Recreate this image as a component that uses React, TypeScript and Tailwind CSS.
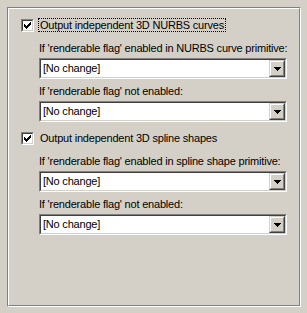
import React from "react";

function Check({ label, focused }: { label: string; focused?: boolean }) {
  return (
    <div className="flex items-center h-[14px]">
      <div className="w-[13px] h-[13px] border-t border-l border-t-[#808080] border-l-[#808080] border-b border-r border-b-white border-r-white">
        <div className="w-full h-full bg-white border-t border-l border-t-[#404040] border-l-[#404040] border-b border-r border-b-[#d4d0c8] border-r-[#d4d0c8] flex items-center justify-center">
          <svg width="7" height="7" viewBox="0 0 7 7" shapeRendering="crispEdges">
            <path d="M0 2h1v3h-1z M1 3h1v3h-1z M2 4h1v3h-1z M3 3h1v3h-1z M4 2h1v3h-1z M5 1h1v3h-1z M6 0h1v3h-1z" fill="#000" />
          </svg>
        </div>
      </div>
      <div
        className={
          focused
            ? "ml-[4px] px-[1px] h-[14px] leading-[12px] border border-dotted border-black"
            : "ml-[5px] h-[14px] leading-[14px] px-[1px]"
        }
      >
        {label}
      </div>
    </div>
  );
}

function Combo() {
  return (
    <div className="w-[248px] h-[21px] border-t border-l border-t-[#808080] border-l-[#808080] border-b border-r border-b-white border-r-white">
      <div className="w-full h-full bg-white border-t border-l border-t-[#404040] border-l-[#404040] border-b border-r border-b-[#d4d0c8] border-r-[#d4d0c8] flex items-center">
        <div className="flex-1 pl-[2px] leading-[13px]">[No change]</div>
        <div className="w-[16px] h-[17px] border-t border-l border-t-[#d4d0c8] border-l-[#d4d0c8] border-b border-r border-b-[#404040] border-r-[#404040]">
          <div className="w-full h-full bg-[#d4d0c8] border-t border-l border-t-white border-l-white border-b border-r border-b-[#808080] border-r-[#808080] flex items-center justify-center">
            <svg width="7" height="4" viewBox="0 0 7 4" shapeRendering="crispEdges">
              <path d="M0 0h7v1h-7z M1 1h5v1h-5z M2 2h3v1h-3z M3 3h1v1h-1z" fill="#000" />
            </svg>
          </div>
        </div>
      </div>
    </div>
  );
}

function Field({ label }: { label: string }) {
  return (
    <div className="flex flex-col ml-[18px]">
      <div className="h-[13px] leading-[13px]">{label}</div>
      <div className="mt-[3px]">
        <Combo />
      </div>
    </div>
  );
}

export default function App() {
  return (
    <div
      className="w-[307px] h-[313px] bg-[#d4d0c8] pt-[7px] pl-[7px] text-[11px] tracking-[-0.2px] text-black"
      style={{ fontFamily: '"Liberation Sans", Arial, sans-serif' }}
    >
      <div className="w-[294px] h-[300px] border-t border-l border-t-[#808080] border-l-[#808080] border-b border-r border-b-white border-r-white">
        <div className="w-full h-full border-t border-l border-t-white border-l-white border-b border-r border-b-[#808080] border-r-[#808080] pl-[12px] pt-[9px]">
          <Check label="Output independent 3D NURBS curves" focused />
          <div className="mt-[10px]">
            <Field label="If 'renderable flag' enabled in NURBS curve primitive:" />
          </div>
          <div className="mt-[6px]">
            <Field label="If 'renderable flag' not enabled:" />
          </div>
          <div className="mt-[9px]">
            <Check label="Output independent 3D spline shapes" />
          </div>
          <div className="mt-[10px]">
            <Field label="If 'renderable flag' enabled in spline shape primitive:" />
          </div>
          <div className="mt-[6px]">
            <Field label="If 'renderable flag' not enabled:" />
          </div>
        </div>
      </div>
    </div>
  );
}
